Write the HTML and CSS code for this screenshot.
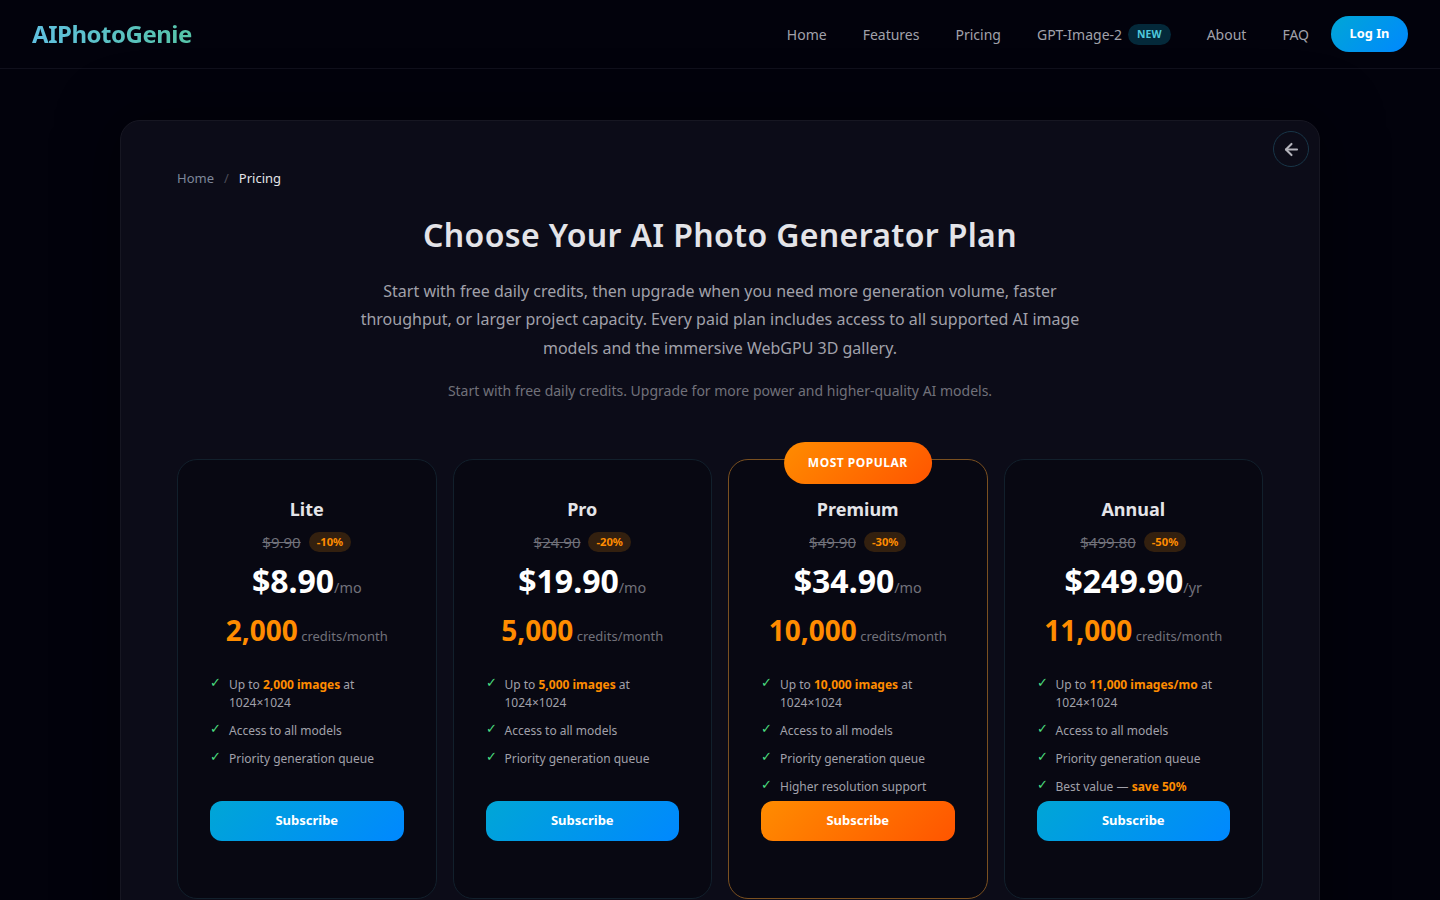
FILE: index.html
```html
<!DOCTYPE html>
<html lang="en">
<head>
    <meta charset="UTF-8">
    <meta name="viewport" content="width=device-width, initial-scale=1.0">
    <title>AIPhotoGenie Pricing</title>
    <link rel="stylesheet" href="styles.css">
</head>
<body>
    <header class="site-header">
        <a class="logo" href="#">AIPhotoGenie</a>
        <nav class="site-nav">
            <a href="#">Home</a>
            <a href="#">Features</a>
            <a href="#">Pricing</a>
            <a href="#" class="nav-new">GPT-Image-2 <span class="new-tag">NEW</span></a>
            <a href="#">About</a>
            <a href="#">FAQ</a>
        </nav>
        <a class="login-btn" href="#">Log In</a>
    </header>

    <main class="panel">
        <a class="back-btn" href="#" aria-label="Back">
            <svg width="19" height="19" viewBox="0 0 24 24" fill="none" stroke="currentColor" stroke-width="2.6" stroke-linecap="round" stroke-linejoin="round"><path d="M19 12H5"/><path d="M12 5l-7 7 7 7"/></svg>
        </a>

        <div class="breadcrumb">
            <a href="#">Home</a>
            <span class="sep">/</span>
            <span class="current">Pricing</span>
        </div>

        <h1>Choose Your AI Photo Generator Plan</h1>
        <p class="intro">Start with free daily credits, then upgrade when you need more generation volume, faster throughput, or larger project capacity. Every paid plan includes access to all supported AI image models and the immersive WebGPU 3D gallery.</p>
        <p class="note">Start with free daily credits. Upgrade for more power and higher-quality AI models.</p>

        <div class="plans">
            <div class="plan">
                <h2>Lite</h2>
                <div class="old-row"><s>$9.90</s><span class="off">-10%</span></div>
                <div class="price">$8.90<small>/mo</small></div>
                <div class="credits"><b>2,000</b> credits/month</div>
                <ul class="features">
                    <li>Up to <em>2,000 images</em> at<br>1024×1024</li>
                    <li>Access to all models</li>
                    <li>Priority generation queue</li>
                </ul>
                <a class="subscribe" href="#">Subscribe</a>
            </div>

            <div class="plan">
                <h2>Pro</h2>
                <div class="old-row"><s>$24.90</s><span class="off">-20%</span></div>
                <div class="price">$19.90<small>/mo</small></div>
                <div class="credits"><b>5,000</b> credits/month</div>
                <ul class="features">
                    <li>Up to <em>5,000 images</em> at<br>1024×1024</li>
                    <li>Access to all models</li>
                    <li>Priority generation queue</li>
                </ul>
                <a class="subscribe" href="#">Subscribe</a>
            </div>

            <div class="plan popular">
                <span class="popular-tag">MOST POPULAR</span>
                <h2>Premium</h2>
                <div class="old-row"><s>$49.90</s><span class="off">-30%</span></div>
                <div class="price">$34.90<small>/mo</small></div>
                <div class="credits"><b>10,000</b> credits/month</div>
                <ul class="features">
                    <li>Up to <em>10,000 images</em> at<br>1024×1024</li>
                    <li>Access to all models</li>
                    <li>Priority generation queue</li>
                    <li>Higher resolution support</li>
                </ul>
                <a class="subscribe" href="#">Subscribe</a>
            </div>

            <div class="plan">
                <h2>Annual</h2>
                <div class="old-row"><s>$499.80</s><span class="off">-50%</span></div>
                <div class="price">$249.90<small>/yr</small></div>
                <div class="credits"><b>11,000</b> credits/month</div>
                <ul class="features">
                    <li>Up to <em>11,000 images/mo</em> at<br>1024×1024</li>
                    <li>Access to all models</li>
                    <li>Priority generation queue</li>
                    <li>Best value — <em>save 50%</em></li>
                </ul>
                <a class="subscribe" href="#">Subscribe</a>
            </div>
        </div>
    </main>
</body>
</html>
```

FILE: styles.css
```css
html, body {
    height: 900px;
    overflow: hidden;
}

body {
    margin: 0;
    background-color: #02020c;
    color: #e4e4e8;
    font-family: "Noto Sans", sans-serif;
}

a {
    text-decoration: none;
    color: inherit;
}

.site-header {
    display: flex;
    align-items: center;
    height: 68px;
    padding: 0 32px;
    border-bottom: 1px solid #10101c;
}

.logo {
    margin-bottom: 2px;
    font-size: 24px;
    font-weight: 700;
    letter-spacing: -0.48px;
    background: linear-gradient(90deg, #60c0e0, #56c4a8);
    -webkit-background-clip: text;
    background-clip: text;
    color: transparent;
}

.site-nav {
    display: flex;
    align-items: center;
    gap: 36px;
    margin-left: auto;
    font-size: 14px;
    color: #a1a1aa;
}

.nav-new {
    display: flex;
    align-items: center;
    gap: 6px;
}

.new-tag {
    padding: 2px 9px;
    border-radius: 11px;
    background-color: #04293a;
    color: #4fc9dd;
    font-size: 10.4px;
    font-weight: 700;
    letter-spacing: 0.1px;
    line-height: 17px;
}

.login-btn {
    margin-left: 22px;
    width: 77px;
    height: 36px;
    line-height: 34px;
    border-radius: 18px;
    background: linear-gradient(135deg, #00a6d6, #0088ff);
    color: #ffffff;
    font-size: 12.8px;
    font-weight: 700;
    text-align: center;
}

.panel {
    position: relative;
    width: 1200px;
    box-sizing: border-box;
    margin: 51px auto 0;
    padding: 46px 56px 60px;
    background-color: #0c0c18;
    border: 1px solid #171722;
    border-radius: 20px;
    box-shadow: 0 0 60px rgba(0, 0, 0, 0.5);
}

.back-btn {
    position: absolute;
    top: 10px;
    right: 10px;
    display: flex;
    align-items: center;
    justify-content: center;
    width: 36px;
    height: 36px;
    box-sizing: border-box;
    border: 1px solid #183648;
    border-radius: 50%;
    color: #b4b4bc;
}

.breadcrumb {
    display: flex;
    gap: 10px;
    font-size: 13px;
    line-height: 22px;
    color: #7d8799;
}

.breadcrumb .sep {
    color: #4b4b57;
}

.breadcrumb .current {
    color: #e4e4e8;
}

h1 {
    margin: 24px 0 0;
    text-align: center;
    font-size: 32px;
    font-weight: 600;
    line-height: 44px;
    letter-spacing: 0.35px;
    color: #e4e4e8;
}

.intro {
    width: 760px;
    margin: 19.6px auto 0;
    text-align: center;
    font-size: 16px;
    line-height: 28.8px;
    color: #a1a1aa;
}

.note {
    margin: 18.4px 0 0;
    text-align: center;
    font-size: 14px;
    line-height: 20px;
    color: #71717a;
}

.plans {
    display: grid;
    grid-template-columns: repeat(4, 1fr);
    gap: 16px;
    margin-top: 58px;
}

.plan {
    position: relative;
    height: 440px;
    box-sizing: border-box;
    padding: 36px 32px 0;
    background-color: #080812;
    border: 1px solid #12202c;
    border-radius: 20px;
    text-align: center;
}

.plan.popular {
    border-color: #7a5020;
}

.popular-tag {
    position: absolute;
    top: -18px;
    left: 50%;
    transform: translateX(-50%);
    padding: 0 24px;
    height: 42px;
    line-height: 41px;
    border-radius: 21px;
    background: linear-gradient(135deg, #ff8c00, #ff5500);
    color: #ffffff;
    font-size: 12px;
    font-weight: 700;
    letter-spacing: 0.5px;
    white-space: nowrap;
}

h2 {
    margin: 0;
    font-size: 18px;
    font-weight: 700;
    line-height: 26px;
    color: #e4e4e8;
}

.old-row {
    display: flex;
    align-items: center;
    justify-content: center;
    gap: 8px;
    margin-top: 10px;
    height: 20px;
}

.old-row s {
    font-size: 15px;
    color: #71717a;
}

.off {
    padding: 0 8px;
    border-radius: 10px;
    background-color: #33200f;
    color: #ff8c00;
    font-size: 11.2px;
    font-weight: 700;
    line-height: 20px;
}

.price {
    margin-top: 7px;
    font-size: 32px;
    font-weight: 700;
    line-height: 44px;
    color: #ffffff;
}

.price small {
    font-size: 14.4px;
    font-weight: 400;
    color: #71717a;
}

.credits {
    margin-top: 0;
    font-size: 13px;
    line-height: 40px;
    color: #71717a;
}

.credits b {
    font-size: 28px;
    font-weight: 700;
    color: #ff8c00;
}

.features {
    height: 125px;
    margin: 20px 0 0;
    padding: 0;
    list-style: none;
    text-align: left;
    font-size: 12px;
    line-height: 18px;
    color: #a1a1aa;
}

.features li {
    position: relative;
    margin-bottom: 10px;
    padding-left: 19px;
}

.features li::before {
    content: "✓";
    position: absolute;
    left: 0;
    top: -3px;
    color: #4ade80;
    font-size: 13px;
}

.features em {
    font-style: normal;
    font-weight: 700;
    color: #ff8c00;
}

.subscribe {
    display: block;
    height: 40px;
    line-height: 38px;
    border-radius: 12px;
    background: linear-gradient(135deg, #00a6d6, #0088ff);
    color: #ffffff;
    font-size: 13px;
    font-weight: 700;
}

.popular .subscribe {
    background: linear-gradient(135deg, #ff8c00, #ff5500);
}
```
